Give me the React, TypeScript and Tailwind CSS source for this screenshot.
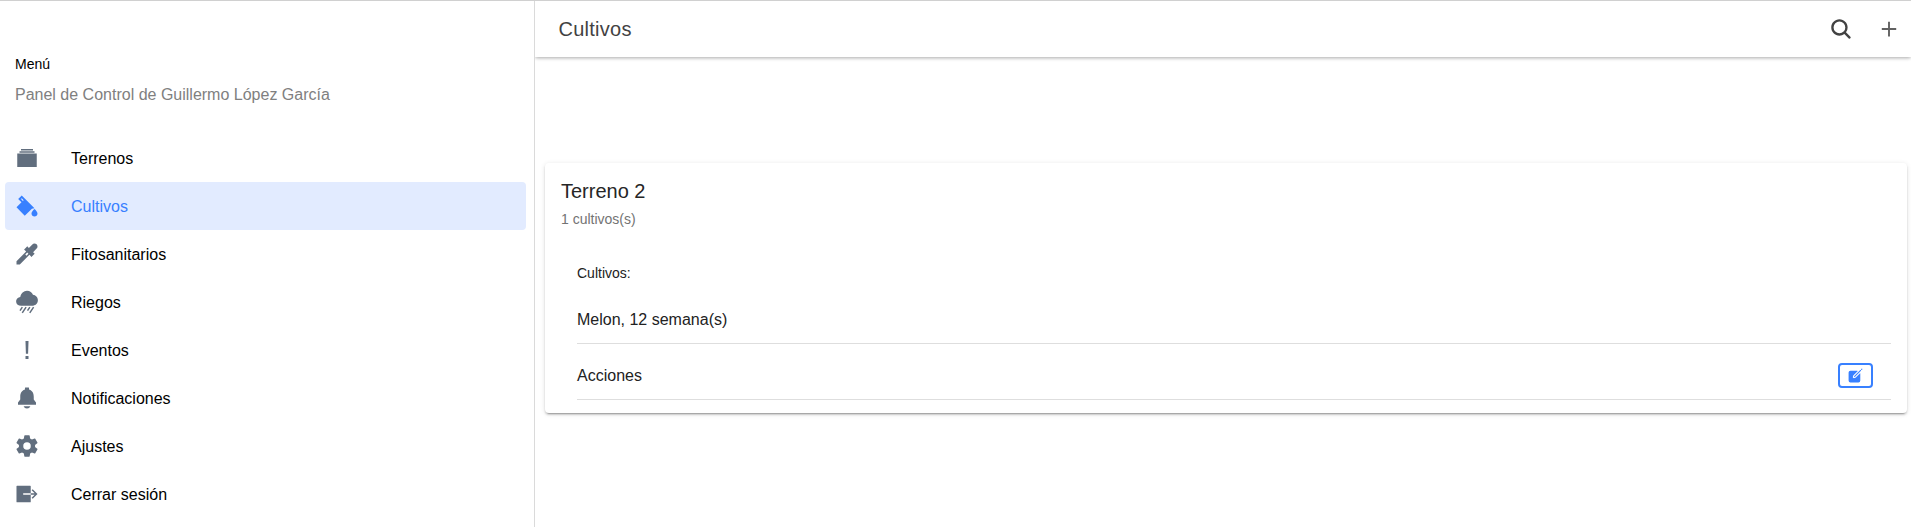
import type { IconType } from "react-icons";
import {
  IoAlbumsSharp,
  IoAlertSharp,
  IoColorFillSharp,
  IoCreate,
  IoExitSharp,
  IoEyedropSharp,
  IoNotificationsSharp,
  IoRainySharp,
  IoSearch,
  IoSettingsSharp,
} from "react-icons/io5";

const items: { label: string; icon: IconType; active?: boolean }[] = [
  { label: "Terrenos", icon: IoAlbumsSharp },
  { label: "Cultivos", icon: IoColorFillSharp, active: true },
  { label: "Fitosanitarios", icon: IoEyedropSharp },
  { label: "Riegos", icon: IoRainySharp },
  { label: "Eventos", icon: IoAlertSharp },
  { label: "Notificaciones", icon: IoNotificationsSharp },
  { label: "Ajustes", icon: IoSettingsSharp },
  { label: "Cerrar sesión", icon: IoExitSharp },
];

function Menu() {
  return (
    <aside className="flex w-[535px] shrink-0 flex-col border-r border-[#dadada] pt-[53px]">
      <h2 className="pl-[15px] text-sm leading-5 text-black">Menú</h2>
      <p className="mt-[9px] pl-[15px] text-base leading-6 text-[#808080]">
        Panel de Control de Guillermo López García
      </p>
      <nav className="mt-[27px] flex flex-col pr-2 pl-[5px]">
        {items.map(({ label, icon: Icon, active }) => (
          <a
            key={label}
            className={
              active
                ? "flex h-12 items-center gap-8 rounded bg-[#e2ebff] pl-[10px] text-[#3880ff]"
                : "flex h-12 items-center gap-8 rounded pl-[10px] text-black"
            }
          >
            <Icon className={active ? "size-6 text-[#3880ff]" : "size-6 text-[#616e7e]"} />
            <span className="pt-0.5 text-base leading-6">{label}</span>
          </a>
        ))}
      </nav>
    </aside>
  );
}

function CropCard() {
  return (
    <section className="mt-[106px] mr-1 ml-[10px] flex h-[250px] flex-col rounded bg-white shadow-[0_3px_1px_-2px_rgba(0,0,0,0.2),0_2px_2px_0_rgba(0,0,0,0.14),0_1px_5px_0_rgba(0,0,0,0.12)]">
      <header className="flex flex-col px-4 pt-4">
        <h2 className="text-xl leading-6 text-[#262626]">Terreno 2</h2>
        <p className="mt-[6px] text-sm leading-5 text-[#737373]">1 cultivos(s)</p>
      </header>
      <div className="mr-4 ml-8 flex flex-col text-[#222]">
        <h3 className="mt-[34px] text-sm leading-5">Cultivos:</h3>
        <div className="mt-[13px] flex h-12 items-center border-b border-[#dedede]">
          <span className="text-base leading-6">Melon, 12 semana(s)</span>
        </div>
        <div className="flex h-14 items-center justify-between border-b border-[#dedede] pt-[19px] pr-[18px] pb-[11px]">
          <span className="text-base leading-6">Acciones</span>
          <button className="flex h-[25px] w-[35px] items-center justify-center rounded border-2 border-[#3880ff] text-[#3880ff]">
            <IoCreate className="size-[17px]" />
          </button>
        </div>
      </div>
    </section>
  );
}

export default function App() {
  return (
    <div className="flex h-[527px] w-full overflow-hidden border-t border-[#d0d0d0] bg-white font-['Liberation_Sans',Arial,sans-serif]">
      <Menu />
      <main className="flex min-w-0 flex-1 flex-col overflow-hidden">
        <header className="flex h-14 shrink-0 items-center pr-[10px] pl-[23.5px] shadow-[0_2px_4px_-1px_rgba(0,0,0,0.2),0_1px_3px_0_rgba(0,0,0,0.16)]">
          <h1 className="flex-1 text-xl leading-6 tracking-[0.0125em] text-[#424242]">Cultivos</h1>
          <IoSearch className="mr-6 size-6 text-[#424242]" />
          <svg viewBox="0 0 24 24" className="size-6 text-[#616161]">
            <path d="M12 4.8v14.6M4.8 12h14.4" fill="none" stroke="currentColor" strokeWidth="1.9" />
          </svg>
        </header>
        <CropCard />
      </main>
    </div>
  );
}
